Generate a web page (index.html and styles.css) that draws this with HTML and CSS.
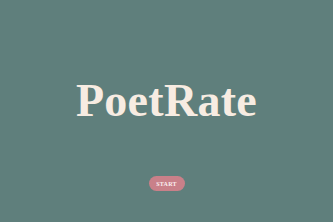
FILE: index.html
```html
<!DOCTYPE html>
<html lang="en">
<head>
    <meta charset="UTF-8">
    <meta name="viewport" content="width=device-width, initial-scale=1.0">
    <title>PoetRate</title>
    <link rel="stylesheet" href="styles.css">
</head>
<body>
    <div class="splash">
        <h1 class="title">PoetRate</h1>
        <button class="start-btn">START</button>
    </div>
</body>
</html>
```

FILE: styles.css
```css
body {
    margin: 0;
    padding: 0;
    background-color: #5f7f7c;
    font-family: "Liberation Serif", serif;
    min-height: 100vh;
}

.splash {
    height: 222px;
    display: flex;
    flex-direction: column;
    align-items: center;
    box-sizing: border-box;
    padding-top: 74px;
}

.title {
    margin: 0;
    font-size: 46px;
    line-height: 54px;
    font-weight: bold;
    letter-spacing: 0.3px;
    color: #f7ece2;
}

.start-btn {
    margin-top: 48px;
    width: 36px;
    height: 15px;
    padding: 0;
    border: none;
    border-radius: 8px;
    background-color: #c98089;
    color: #fbeff0;
    font-family: "Liberation Serif", serif;
    font-size: 6px;
    font-weight: bold;
    letter-spacing: 0.2px;
    cursor: pointer;
}
```
